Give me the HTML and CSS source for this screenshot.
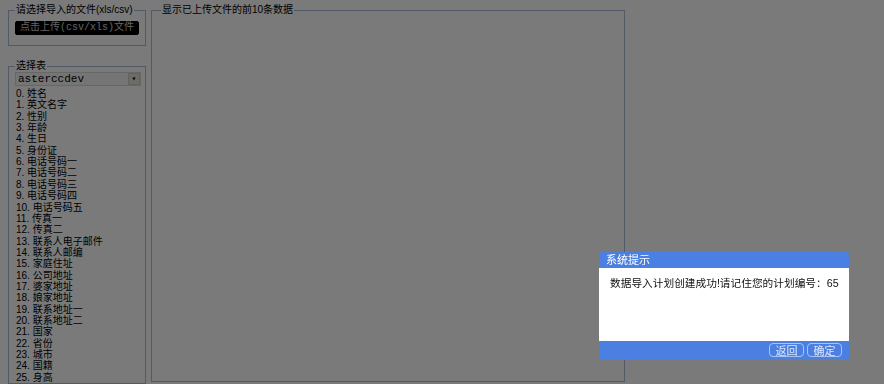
FILE: index.html
```html
<!DOCTYPE html>
<html lang="zh-CN">
<head>
  <meta charset="UTF-8">
  <title>数据导入</title>
  <link rel="stylesheet" href="styles.css">
</head>
<body>
  <div class="page">
    <div class="side">
      <fieldset class="box upload-box">
        <legend>请选择导入的文件(xls/csv)</legend>
        <button class="upload-btn">点击上传(csv/xls)文件</button>
      </fieldset>
      <fieldset class="box table-box">
        <legend>选择表</legend>
        <div class="select">
          <span>asterccdev</span>
          <span class="arrow">▾</span>
        </div>
        <ul class="fields">
          <li>0. 姓名</li>
          <li>1. 英文名字</li>
          <li>2. 性别</li>
          <li>3. 年龄</li>
          <li>4. 生日</li>
          <li>5. 身份证</li>
          <li>6. 电话号码一</li>
          <li>7. 电话号码二</li>
          <li>8. 电话号码三</li>
          <li>9. 电话号码四</li>
          <li>10. 电话号码五</li>
          <li>11. 传真一</li>
          <li>12. 传真二</li>
          <li>13. 联系人电子邮件</li>
          <li>14. 联系人邮编</li>
          <li>15. 家庭住址</li>
          <li>16. 公司地址</li>
          <li>17. 婆家地址</li>
          <li>18. 娘家地址</li>
          <li>19. 联系地址一</li>
          <li>20. 联系地址二</li>
          <li>21. 国家</li>
          <li>22. 省份</li>
          <li>23. 城市</li>
          <li>24. 国籍</li>
          <li>25. 身高</li>
        </ul>
      </fieldset>
    </div>
    <fieldset class="box preview-box">
      <legend>显示已上传文件的前10条数据</legend>
    </fieldset>
  </div>

  <div class="mask"></div>

  <div class="dialog">
    <div class="dialog-title">系统提示</div>
    <div class="dialog-body">数据导入计划创建成功!请记住您的计划编号：65</div>
    <div class="dialog-foot">
      <button class="dlg-btn">返回</button>
      <button class="dlg-btn">确定</button>
    </div>
  </div>
</body>
</html>
```

FILE: styles.css
```css
body {
  margin: 0;
  background: #fff;
  font-family: "Liberation Sans", "Noto Sans CJK SC", sans-serif;
  font-size: 10px;
  color: #000;
  overflow: hidden;
}
.page {
  display: flex;
  gap: 5px;
  padding: 4px 0 0 8px;
  height: 380px;
}
.side {
  display: flex;
  flex-direction: column;
  gap: 14px;
  width: 138px;
}
.box {
  margin: 0;
  border: 1px solid #aabdd6;
  border-radius: 0;
  padding: 0 6px;
}
.box legend {
  padding: 0 1px;
  margin-left: 0;
  font-size: 10px;
  line-height: 12px;
  white-space: nowrap;
}
.upload-box {
  height: 40px;
  padding-top: 5px;
}
.upload-btn {
  display: block;
  width: 124px;
  height: 14px;
  padding: 0;
  border: 1px solid #000;
  border-radius: 2px;
  background: #000;
  color: #d0d0d0;
  font-family: "Liberation Mono", "Noto Sans CJK SC", monospace;
  font-size: 10px;
  line-height: 12px;
  white-space: nowrap;
}
.table-box {
  flex: 1;
  padding-top: 0;
}
.select {
  display: flex;
  justify-content: space-between;
  align-items: center;
  height: 12px;
  margin-right: -2px;
  padding-left: 2px;
  background: #f4f4f4;
  border: 1px solid #d8d8d8;
  font-family: "Liberation Mono", monospace;
  font-size: 11px;
}
.arrow {
  width: 10px;
  height: 10px;
  background: #e4e2da;
  border: 1px solid #cfcdc4;
  font-size: 8px;
  line-height: 10px;
  text-align: center;
}
.fields {
  list-style: none;
  margin: 2px 0 0 1px;
  padding: 0;
}
.fields li {
  height: 11.35px;
  line-height: 11.35px;
  font-size: 10px;
  white-space: nowrap;
}
.preview-box {
  width: 457px;
  height: 376px;
  padding-left: 9px;
}
.mask {
  position: fixed;
  inset: 0;
  background: rgba(0, 0, 0, 0.52);
}
.dialog {
  position: absolute;
  left: 599px;
  top: 252px;
  width: 250px;
  background: #4b80e2;
  border-radius: 3px;
  overflow: hidden;
}
.dialog-title {
  height: 16px;
  line-height: 16px;
  padding-left: 7px;
  color: #fff;
  font-size: 11px;
}
.dialog-body {
  height: 66px;
  padding: 7px 0 0 11px;
  background: #fff;
  color: #111;
  font-size: 10.7px;
  line-height: 16px;
  white-space: nowrap;
}
.dialog-foot {
  display: flex;
  justify-content: flex-end;
  gap: 3px;
  height: 19px;
  padding: 2px 7px 0 0;
  box-sizing: border-box;
}
.dlg-btn {
  width: 35px;
  height: 14px;
  padding: 0;
  border: 1px solid #a9c3f2;
  border-radius: 4px;
  background: #4b80e2;
  color: #dfe8fb;
  font-family: "Noto Sans CJK SC", sans-serif;
  font-size: 11px;
  line-height: 12px;
}
```
